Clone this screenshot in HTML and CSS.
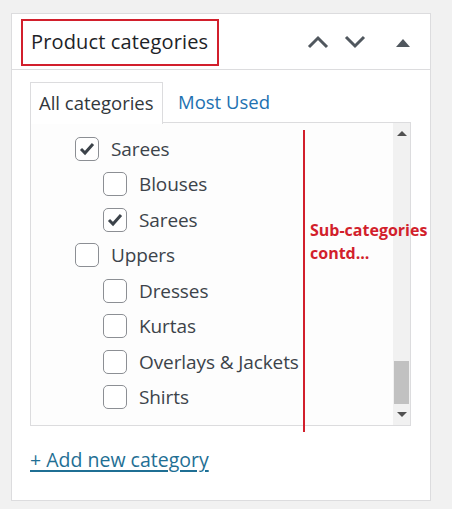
FILE: index.html
```html
<!DOCTYPE html>
<html>
<head>
<meta charset="utf-8">
<link rel="stylesheet" href="styles.css">
</head>
<body>
<div class="panel">
  <div class="head">
    <h2 class="title">Product categories</h2>
    <div class="controls">
      <svg class="chev" width="22" height="14" viewBox="0 0 22 14"><path d="M2 12 L11 3 L20 12" fill="none" stroke="#50575e" stroke-width="3"/></svg>
      <svg class="chev" width="22" height="14" viewBox="0 0 22 14"><path d="M2 2 L11 11 L20 2" fill="none" stroke="#50575e" stroke-width="3"/></svg>
      <svg class="tri" width="14" height="9" viewBox="0 0 14 9"><path d="M0 9 L7 1 L14 9 Z" fill="#50575e"/></svg>
    </div>
  </div>
  <div class="body">
    <div class="tabs">
      <div class="tab active">All categories</div>
      <div class="tab link">Most Used</div>
    </div>
    <div class="box">
      <ul class="list">
        <li class="item l1"><span class="cb checked"><svg width="16" height="14" viewBox="0 0 16 14"><path d="M2 7 L6 11 L14 2" fill="none" stroke="#3c434a" stroke-width="3"/></svg></span>Sarees</li>
        <li class="item l2"><span class="cb"></span>Blouses</li>
        <li class="item l2"><span class="cb checked"><svg width="16" height="14" viewBox="0 0 16 14"><path d="M2 7 L6 11 L14 2" fill="none" stroke="#3c434a" stroke-width="3"/></svg></span>Sarees</li>
        <li class="item l1"><span class="cb"></span>Uppers</li>
        <li class="item l2"><span class="cb"></span>Dresses</li>
        <li class="item l2"><span class="cb"></span>Kurtas</li>
        <li class="item l2"><span class="cb"></span>Overlays &amp; Jackets</li>
        <li class="item l2"><span class="cb"></span>Shirts</li>
      </ul>
      <div class="scrollbar">
        <div class="arrow up"></div>
        <div class="track"><div class="thumb"></div></div>
        <div class="arrow down"></div>
      </div>
    </div>
    <a class="add" href="#">+ Add new category</a>
  </div>
  <div class="note-line"></div>
  <div class="note">Sub-categories<br>contd...</div>
</div>
</body>
</html>
```
FILE: styles.css
```css
html, body {
  margin: 0;
  padding: 0;
  background: #f1f1f1;
  font-family: "Open Sans", "Noto Sans", sans-serif;
  color: #32373c;
}
body {
  padding: 13px 0 0 11px;
}
.panel {
  position: relative;
  width: 418px;
  height: 486px;
  background: #fff;
  border: 1px solid #dcdcde;
}
.head {
  height: 55px;
  border-bottom: 1px solid #dcdcde;
  display: flex;
  align-items: flex-start;
  justify-content: space-between;
}
.title {
  margin: 5px 0 0 9px;
  width: 186px;
  height: 43px;
  border: 2px solid #d21f2c;
  font-size: 20px;
  font-weight: 400;
  line-height: 42px;
  padding-left: 8px;
  box-sizing: content-box;
  color: #1d2327;
  letter-spacing: 0.15px;
  white-space: nowrap;
}
.controls {
  display: flex;
  align-items: center;
  margin-top: 21px;
  margin-right: 20px;
}
.chev { margin-right: 15px; }
.tri { margin-left: 15px; }
.body {
  padding: 12px 0 0 18px;
}
.tabs {
  display: flex;
  height: 40px;
}
.tab {
  font-size: 18.5px;
  line-height: 40px;
}
.tab.active {
  border: 1px solid #dcdcde;
  border-bottom: none;
  background: #fff;
  width: 123px;
  padding-left: 8px;
  height: 41px;
  color: #32373c;
  position: relative;
  z-index: 1;
}
.tab.link {
  color: #2271b1;
  margin-left: 15px;
}
.box {
  width: 379px;
  height: 302px;
  border: 1px solid #dcdcde;
  display: flex;
  background: #fdfdfd;
}
.list {
  list-style: none;
  margin: 0;
  padding: 8px 0 0 0;
  flex: 1;
}
.item {
  height: 35.5px;
  display: flex;
  align-items: center;
  font-size: 19px;
  letter-spacing: -0.1px;
  color: #3c434a;
}
.item.l1 { padding-left: 44px; }
.item.l2 { padding-left: 72px; }
.cb {
  width: 22px;
  height: 22px;
  border: 1px solid #8c8f94;
  border-radius: 5px;
  background: #fff;
  margin-right: 12px;
  display: flex;
  align-items: center;
  justify-content: center;
  flex: none;
}
.scrollbar {
  width: 17px;
  background: #f1f1f1;
  display: flex;
  flex-direction: column;
}
.arrow {
  height: 21px;
  display: flex;
  justify-content: center;
  align-items: center;
}
.arrow.up::before {
  content: "";
  border-left: 5px solid transparent;
  border-right: 5px solid transparent;
  border-bottom: 5px solid #505050;
}
.arrow.down::before {
  content: "";
  border-left: 5px solid transparent;
  border-right: 5px solid transparent;
  border-top: 5px solid #505050;
}
.track {
  flex: 1;
  display: flex;
  flex-direction: column;
  justify-content: flex-end;
}
.thumb {
  height: 43px;
  margin: 0 1px 0 1px;
  background: #c1c1c1;
}
.add {
  display: inline-block;
  margin-top: 20px;
  font-size: 19.5px;
  color: #1f6f94;
  text-decoration: underline;
  text-decoration-thickness: 2px;
  text-underline-offset: 3px;
}
.note-line {
  position: absolute;
  left: 291px;
  top: 116px;
  width: 2px;
  height: 302px;
  background: #d21f2c;
}
.note {
  position: absolute;
  left: 298px;
  top: 205px;
  font-size: 16px;
  font-weight: 700;
  line-height: 23px;
  color: #d21f2c;
  white-space: nowrap;
}
```
